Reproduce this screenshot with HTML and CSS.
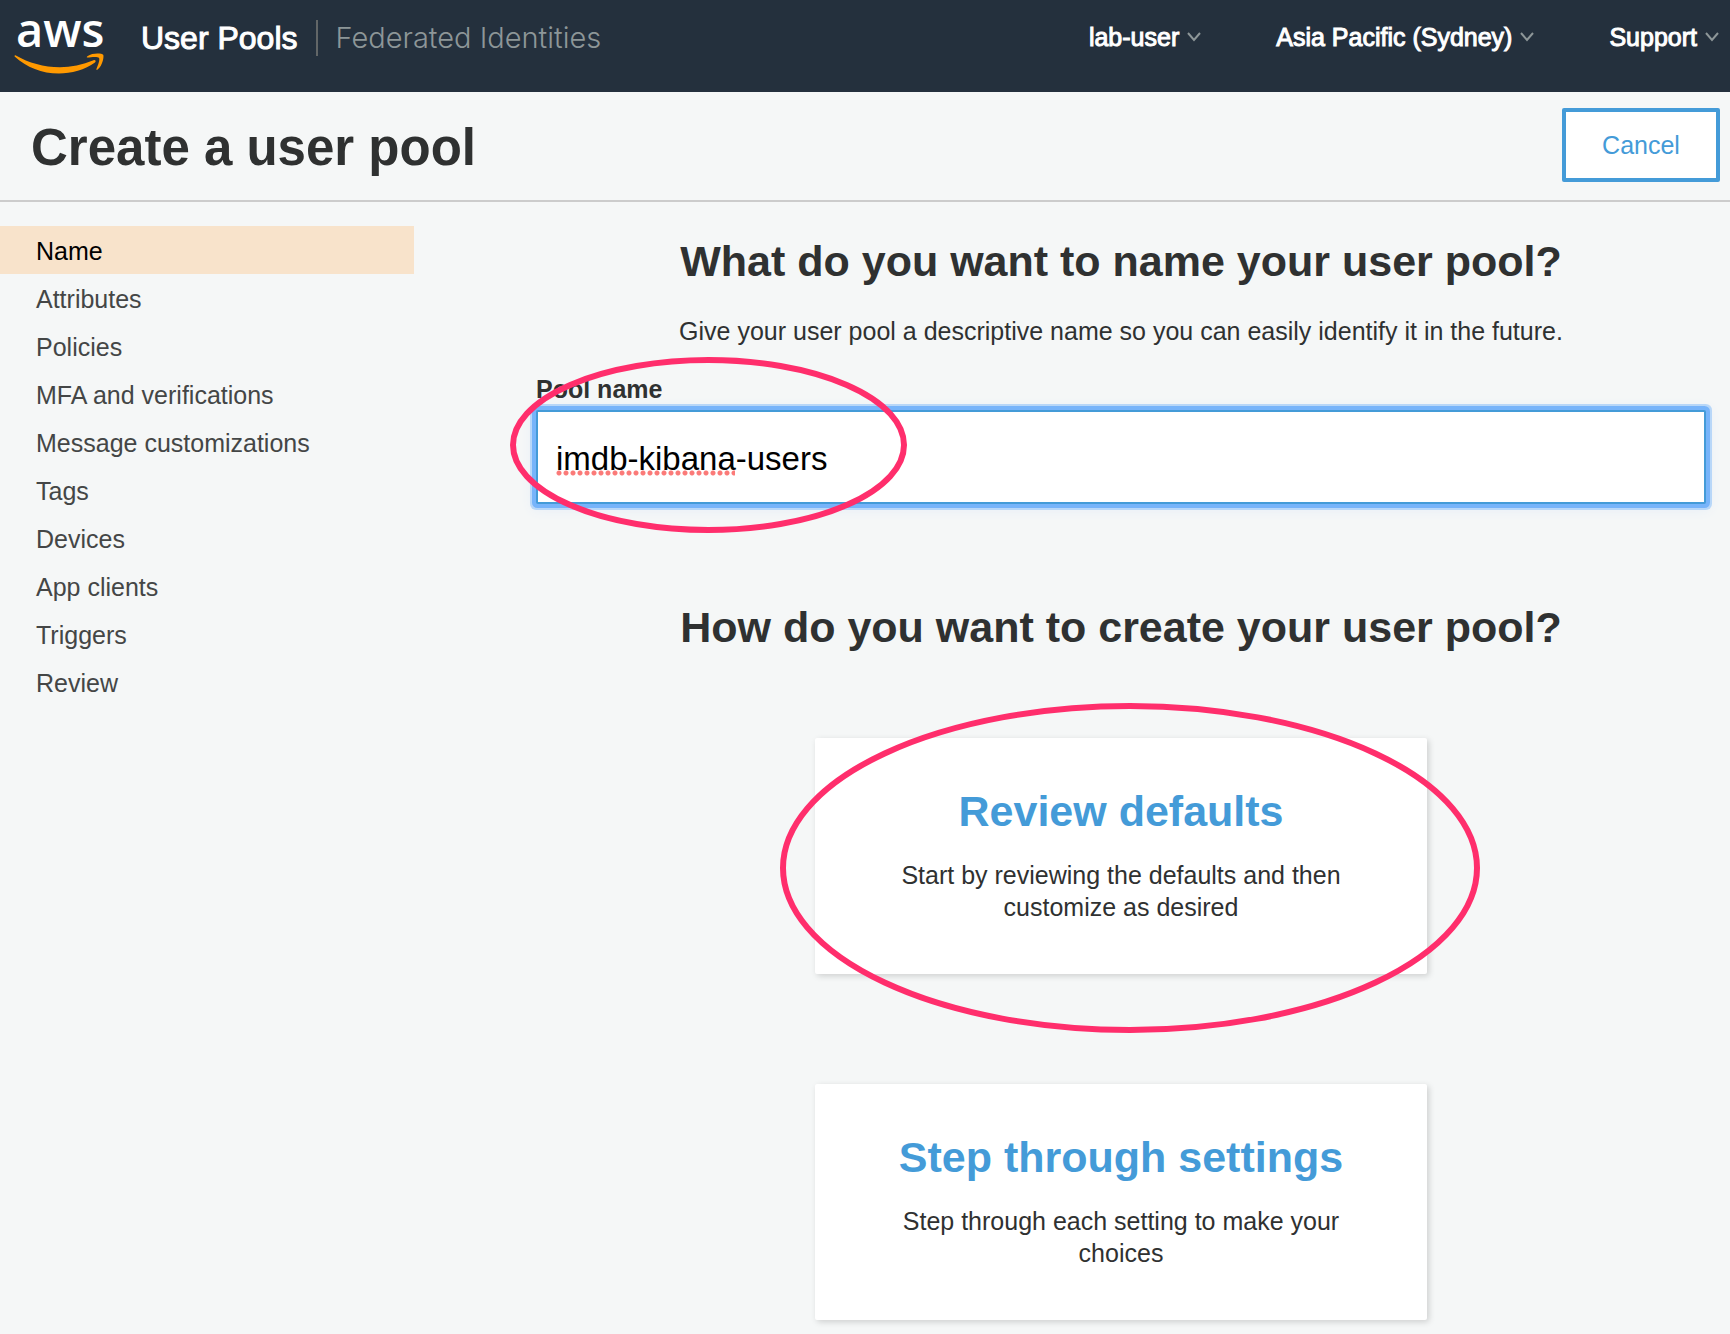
FILE: index.html
```html
<!DOCTYPE html>
<html lang="en">
<head>
<meta charset="utf-8">
<title>Create a user pool</title>
<link rel="stylesheet" href="styles.css">
</head>
<body>
<header class="topbar">
  <a class="logo" href="#" aria-label="AWS home">
    <svg class="logo-art" viewBox="0 0 92 76" width="92" height="76">
      <text class="logo-text" x="2" y="47">aws</text>
      <g fill="#ff9900" transform="translate(0 20) scale(.296)">
        <path d="M273.5 143.7c-32.9 24.3-80.7 37.2-121.8 37.2-57.6 0-109.5-21.3-148.7-56.7-3.1-2.8-.3-6.6 3.4-4.4 42.4 24.6 94.7 39.5 148.8 39.5 36.5 0 76.6-7.6 113.5-23.2 5.5-2.5 10.2 3.6 4.8 7.6z"/>
        <path d="M287.2 128.1c-4.2-5.4-27.8-2.6-38.5-1.3-3.2.4-3.7-2.4-.8-4.5 18.8-13.2 49.7-9.4 53.3-5 3.6 4.5-1 35.4-18.6 50.2-2.7 2.3-5.3 1.1-4.1-1.9 4-9.9 12.9-32.2 8.7-37.5z"/>
      </g>
    </svg>
  </a>
  <nav class="services" aria-label="Service">
    <a class="service current" href="#">User Pools</a>
    <a class="service federated" href="#">Federated Identities</a>
  </nav>
  <nav class="account" aria-label="Account">
    <button class="menu" type="button">lab-user <svg class="chevron" viewBox="0 0 14 10"><path d="M1 1l6 7 6-7"/></svg></button>
    <button class="menu" type="button">Asia Pacific (Sydney) <svg class="chevron" viewBox="0 0 14 10"><path d="M1 1l6 7 6-7"/></svg></button>
    <button class="menu" type="button">Support <svg class="chevron" viewBox="0 0 14 10"><path d="M1 1l6 7 6-7"/></svg></button>
  </nav>
</header>
<div class="titlebar">
  <h1 class="title">Create a user pool</h1>
  <button class="cancel" type="button">Cancel</button>
</div>
<div class="columns">
  <nav class="steps" aria-label="Steps">
    <a class="step active" href="#">Name</a>
    <a class="step" href="#">Attributes</a>
    <a class="step" href="#">Policies</a>
    <a class="step" href="#">MFA and verifications</a>
    <a class="step" href="#">Message customizations</a>
    <a class="step" href="#">Tags</a>
    <a class="step" href="#">Devices</a>
    <a class="step" href="#">App clients</a>
    <a class="step" href="#">Triggers</a>
    <a class="step" href="#">Review</a>
  </nav>
  <main class="content">
    <h2 class="question">What do you want to name your user pool?</h2>
    <p class="hint">Give your user pool a descriptive name so you can easily identify it in the future.</p>
    <label class="label" for="pool-name">Pool name</label>
    <div class="field">
      <input class="input" id="pool-name" type="text" value="imdb-kibana-users" spellcheck="false">
      <span class="spelling"></span>
      <svg class="ring ring-name" viewBox="0 0 397 176"><ellipse cx="198.5" cy="88" rx="195.5" ry="85"/></svg>
    </div>
    <h2 class="question second">How do you want to create your user pool?</h2>
    <div class="cards">
      <div class="choice">
        <a class="card" href="#">
          <h3 class="card-title">Review defaults</h3>
          <p class="card-text">Start by reviewing the defaults and then customize as desired</p>
        </a>
        <svg class="ring ring-review" viewBox="0 0 700 330"><ellipse cx="350" cy="165" rx="347" ry="162"/></svg>
      </div>
      <div class="choice">
        <a class="card" href="#">
          <h3 class="card-title">Step through settings</h3>
          <p class="card-text">Step through each setting to make your choices</p>
        </a>
      </div>
    </div>
  </main>
</div>
</body>
</html>
```
FILE: styles.css
```css
* { box-sizing: border-box; }

body {
  margin: 0;
  background: #f5f7f7;
  color: #2f3131;
  font-family: "Liberation Sans", Arial, sans-serif;
  font-size: 25px;
  line-height: 32px;
}

h1, h2, h3, p { margin: 0; }
a { color: inherit; text-decoration: none; }
button, input { font-family: inherit; }

/* Top bar */
.topbar {
  display: flex;
  align-items: flex-start;
  height: 92px;
  padding: 0 11px 0 14px;
  background: #24303d;
  color: #fff;
}
.logo { margin-right: 35px; }
.logo-art { display: block; overflow: visible; }
.logo-text {
  fill: #fff;
  font: 600 47px "Open Sans", "Noto Sans", sans-serif;
}
.services {
  display: flex;
  margin-top: 20px;
}
.service {
  font-size: 32px;
  line-height: 36px;
  white-space: nowrap;
}
.current {
  padding-right: 18px;
  border-right: 2px solid #626667;
  -webkit-text-stroke: 1px #fff;
}
.federated {
  padding-left: 18px;
  color: #8d9698;
  font-family: Inter, "Liberation Sans", sans-serif;
  font-size: 29px;
  font-weight: 300;
}
.account {
  display: flex;
  gap: 75px;
  margin: 19px 0 0 auto;
}
.menu {
  display: flex;
  align-items: center;
  gap: 8px;
  padding: 0;
  border: 0;
  background: none;
  color: #fff;
  font-size: 25px;
  line-height: 36px;
  white-space: nowrap;
  -webkit-text-stroke: 1px #fff;
}
.chevron {
  width: 14px;
  height: 10px;
  fill: none;
  stroke: #8d9698;
  stroke-width: 2;
}

/* Page title */
.titlebar {
  display: flex;
  align-items: flex-start;
  justify-content: space-between;
  height: 110px;
  padding: 16px 10px 0 31px;
  border-bottom: 2px solid #ccc;
}
.title {
  padding-top: 12px;
  font-size: 51px;
  line-height: 56px;
}
.cancel {
  width: 158px;
  height: 74px;
  border: 4px solid #449bd8;
  border-radius: 2px;
  background: #fff;
  color: #449bd8;
  font-size: 25px;
}

/* Steps and content */
.columns { display: flex; }
.steps {
  flex: 0 0 414px;
  padding-top: 24px;
}
.step {
  display: block;
  padding: 2px 0 0 36px;
  color: #444646;
  line-height: 46px;
}
.active {
  background: #f8e3cb;
  color: #000;
}
.content {
  flex: 1;
  padding: 33px 24px 14px 122px;
}
.question {
  font-size: 43px;
  line-height: 52px;
  text-align: center;
}
.second { margin-top: 97px; }
.hint {
  margin: 28px 0 26px;
  text-align: center;
}
.label {
  display: block;
  margin-bottom: 5px;
  font-weight: bold;
}
.field { position: relative; }
.input {
  display: block;
  width: 100%;
  height: 94px;
  padding: 4px 18px 0;
  border: 2px solid #449bd8;
  border-radius: 2px;
  outline: 0;
  background: #fff;
  box-shadow: 0 0 0 4px #77b4fa, 0 0 0 6px #b8d7f8, 0 2px 12px 4px #e6eef7;
  color: #000;
  font-size: 33px;
}

/* Spelling mark under the unknown words */
.spelling {
  position: absolute;
  left: 20px;
  top: 60px;
  width: 179px;
  height: 6px;
  background: radial-gradient(circle at 3px 3px, #fb7a78 2px, transparent 3px) 0 0 / 7px 6px;
}

/* Hand-drawn highlights */
.ring {
  position: absolute;
  fill: none;
  stroke: #ff2e6c;
  stroke-width: 6;
  pointer-events: none;
}
.ring-name {
  left: -26px;
  top: -53px;
  width: 397px;
  height: 176px;
}
.ring-review {
  left: -35px;
  top: -35px;
  width: 700px;
  height: 330px;
}

.cards {
  display: flex;
  flex-direction: column;
  align-items: center;
  gap: 110px;
  margin-top: 85px;
}
.choice {
  position: relative;
  width: 612px;
}
.card {
  display: block;
  padding: 47px 78px 51px;
  border-radius: 2px;
  background: #fff;
  box-shadow: 2px 2px 6px rgba(0, 0, 0, .16);
  text-align: center;
}
.card-title {
  margin-bottom: 22px;
  color: #449bd8;
  font-size: 43px;
  line-height: 52px;
}
```
